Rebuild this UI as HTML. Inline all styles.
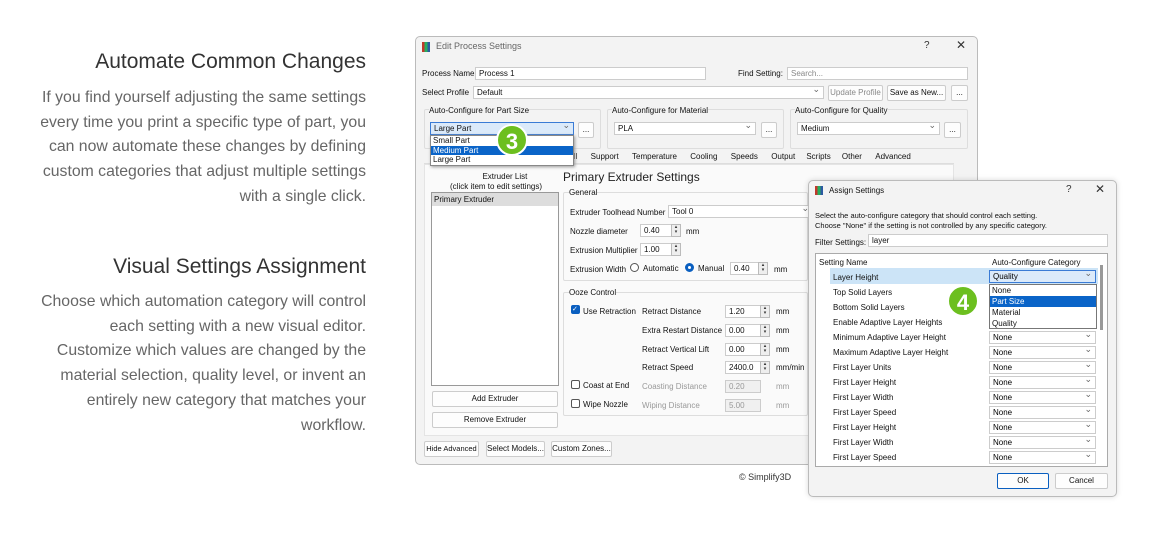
<!DOCTYPE html><html><head><style>
*{box-sizing:border-box;margin:0;padding:0}
body{width:1168px;height:547px;background:#fff;position:relative;overflow:hidden;font-family:"Liberation Sans",sans-serif}
.a{position:absolute;white-space:nowrap}
.h{right:802px;font-size:21px;color:#333;text-align:right}
.p{right:802px;font-size:15.8px;color:#666;text-align:right;line-height:24.7px}
.u{font-size:8px;color:#111}
.in{position:absolute;background:#fff;border:1px solid #ccc;font-size:8px;padding:1px 3px;height:13px;line-height:10px;color:#111;white-space:nowrap}
.btn{position:absolute;background:#fdfdfd;border:1px solid #ccc;border-radius:2px;font-size:8px;text-align:center;line-height:14px;height:16px;color:#111;white-space:nowrap;overflow:hidden}
.grp{position:absolute;border:1px solid #ddd;border-radius:2px}
.dd::after{content:"⌄";position:absolute;right:3px;top:-3px;color:#666;font-size:9px}
.sp{position:absolute;width:10px;height:13px;border:1px solid #bbb;background:#eee;font-size:5px;text-align:center;line-height:5px;color:#333}
.cb{position:absolute;width:9px;height:9px;border:1px solid #555;border-radius:2px;background:#fff}
.badge{position:absolute;width:32px;height:32px;border-radius:50%;background:#6cbf1f;color:#fff;font-weight:bold;font-size:22px;text-align:center;line-height:32px;border:2px solid #fff}
.row{position:absolute;left:833px;font-size:8px;color:#111}
.sel{position:absolute;left:989px;width:107px;height:13px;border:1px solid #ccc;background:#fff;font-size:8px;padding:1px 3px;line-height:10px}
</style></head><body>
<div class="a h" style="top:50px">Automate Common Changes</div>
<div class="a p" style="top:86px">If you find yourself adjusting the same settings<br>every time you print a specific type of part, you<br>can now automate these changes by defining<br>custom categories that adjust multiple settings<br>with a single click.</div>
<div class="a h" style="top:255px">Visual Settings Assignment</div>
<div class="a p" style="top:290px">Choose which automation category will control<br>each setting with a new visual editor.<br>Customize which values are changed by the<br>material selection, quality level, or invent an<br>entirely new category that matches your<br>workflow.</div>

<!-- main window -->
<div class="a" style="left:415px;top:36px;width:563px;height:429px;background:#f3f3f3;border:1px solid #bbb;border-radius:5px"></div>
<div class="a" style="left:422px;top:42px;width:8px;height:10px;background:linear-gradient(90deg,#c0392b 33%,#27ae60 33% 66%,#2c5aa0 66%)"></div>
<div class="a u" style="left:436px;top:41px;color:#666;font-size:9px">Edit Process Settings</div>
<div class="a" style="left:924px;top:40px;font-size:10px;color:#333">?</div>
<div class="a" style="left:956px;top:38px;font-size:12px;color:#333">✕</div>
<div class="a u" style="left:422px;top:69px">Process Name</div>
<div class="in" style="left:475px;top:67px;width:231px">Process 1</div>
<div class="a u" style="left:738px;top:69px">Find Setting:</div>
<div class="in" style="left:787px;top:67px;width:181px;color:#888">Search...</div>
<div class="a u" style="left:422px;top:88px">Select Profile</div>
<div class="in dd" style="left:473px;top:86px;width:351px">Default</div>
<div class="btn" style="left:828px;top:85px;width:55px;color:#888">Update Profile</div>
<div class="btn" style="left:887px;top:85px;width:59px">Save as New...</div>
<div class="btn" style="left:951px;top:85px;width:17px">...</div>
<div class="grp" style="left:424px;top:109px;width:177px;height:40px"></div>
<div class="a u" style="left:429px;top:106px;background:#f3f3f3">Auto-Configure for Part Size</div>
<div class="grp" style="left:607px;top:109px;width:177px;height:40px"></div>
<div class="a u" style="left:612px;top:106px;background:#f3f3f3">Auto-Configure for Material</div>
<div class="grp" style="left:790px;top:109px;width:178px;height:40px"></div>
<div class="a u" style="left:795px;top:106px;background:#f3f3f3">Auto-Configure for Quality</div>
<div class="in dd" style="left:430px;top:122px;width:144px;border-color:#3a7bd5;background:#dbeafa">Large Part</div>
<div class="btn" style="left:578px;top:122px;width:16px">...</div>
<div class="in dd" style="left:614px;top:122px;width:142px">PLA</div>
<div class="btn" style="left:761px;top:122px;width:16px">...</div>
<div class="in dd" style="left:797px;top:122px;width:143px">Medium</div>
<div class="btn" style="left:944px;top:122px;width:17px">...</div>
<!-- tabs -->
<div class="a" style="left:424px;top:149px;width:530px;height:15px;border-bottom:1px solid #ddd"></div>
<div class="a u" style="left:572px;top:152px">ill&nbsp;&nbsp;&nbsp;&nbsp;&nbsp;&nbsp;Support&nbsp;&nbsp;&nbsp;&nbsp;&nbsp;&nbsp;Temperature&nbsp;&nbsp;&nbsp;&nbsp;&nbsp;&nbsp;Cooling&nbsp;&nbsp;&nbsp;&nbsp;&nbsp;&nbsp;Speeds&nbsp;&nbsp;&nbsp;&nbsp;&nbsp;&nbsp;Output&nbsp;&nbsp;&nbsp;&nbsp;&nbsp;Scripts&nbsp;&nbsp;&nbsp;&nbsp;&nbsp;Other&nbsp;&nbsp;&nbsp;&nbsp;&nbsp;&nbsp;Advanced</div>
<div class="a" style="left:424px;top:164px;width:530px;height:272px;background:#fafafa;border:1px solid #e4e4e4"></div>
<!-- dropdown list -->
<div class="a" style="left:430px;top:135px;width:144px;height:31px;background:#fff;border:1px solid #888;box-shadow:1px 1px 3px #999;font-size:8px;line-height:9.5px;color:#111">
<div style="padding-left:2px">Small Part</div><div style="padding-left:2px;background:#0a64c8;color:#fff">Medium Part</div><div style="padding-left:2px">Large Part</div></div>
<div class="badge" style="left:496px;top:124px">3</div>
<div class="a u" style="left:450px;top:172px;text-align:center;line-height:9.5px">&nbsp;&nbsp;&nbsp;&nbsp;&nbsp;&nbsp;&nbsp;&nbsp;Extruder List<br>(click item to edit settings)</div>
<div class="a" style="left:431px;top:192px;width:128px;height:194px;background:#fff;border:1px solid #999"></div>
<div class="a u" style="left:432px;top:193px;width:126px;height:13px;background:#ddd;padding:2px"> Primary Extruder</div>
<div class="btn" style="left:432px;top:391px;width:126px">Add Extruder</div>
<div class="btn" style="left:432px;top:412px;width:126px">Remove Extruder</div>
<div class="a" style="left:563px;top:170px;font-size:12px;color:#222">Primary Extruder Settings</div>
<div class="grp" style="left:563px;top:192px;width:245px;height:89px"></div>
<div class="a u" style="left:569px;top:188px;background:#fafafa">General</div>
<div class="a u" style="left:570px;top:208px">Extruder Toolhead Number</div>
<div class="in dd" style="left:668px;top:205px;width:145px">Tool 0</div>
<div class="a u" style="left:570px;top:227px">Nozzle diameter</div>
<div class="in" style="left:640px;top:224px;width:32px">0.40</div><div class="sp" style="left:671px;top:224px">▴<br>▾</div><div class="a u" style="left:686px;top:227px">mm</div>
<div class="a u" style="left:570px;top:246px">Extrusion Multiplier</div>
<div class="in" style="left:640px;top:243px;width:32px">1.00</div><div class="sp" style="left:671px;top:243px">▴<br>▾</div>
<div class="a u" style="left:570px;top:265px">Extrusion Width</div>
<div class="a" style="left:630px;top:263px;width:9px;height:9px;border:1px solid #555;border-radius:50%;background:#fff"></div>
<div class="a u" style="left:643px;top:264px">Automatic</div>
<div class="a" style="left:685px;top:263px;width:9px;height:9px;border:3px solid #0a5fc0;border-radius:50%;background:#fff"></div>
<div class="a u" style="left:698px;top:264px">Manual</div>
<div class="in" style="left:730px;top:262px;width:29px">0.40</div><div class="sp" style="left:758px;top:262px">▴<br>▾</div><div class="a u" style="left:774px;top:265px">mm</div>
<div class="grp" style="left:563px;top:292px;width:245px;height:124px"></div>
<div class="a u" style="left:569px;top:288px;background:#fafafa">Ooze Control</div>
<div class="cb" style="left:571px;top:305px;background:#0a5fc0;border-color:#0a5fc0;color:#fff;font-size:7px;line-height:7px">✓</div>
<div class="a u" style="left:583px;top:307px">Use Retraction</div>
<div class="a u" style="left:642px;top:307px">Retract Distance</div><div class="in" style="left:725px;top:305px;width:36px">1.20</div><div class="sp" style="left:760px;top:305px">▴<br>▾</div><div class="a u" style="left:776px;top:307px">mm</div>
<div class="a u" style="left:642px;top:326px">Extra Restart Distance</div><div class="in" style="left:725px;top:324px;width:36px">0.00</div><div class="sp" style="left:760px;top:324px">▴<br>▾</div><div class="a u" style="left:776px;top:326px">mm</div>
<div class="a u" style="left:642px;top:345px">Retract Vertical Lift</div><div class="in" style="left:725px;top:343px;width:36px">0.00</div><div class="sp" style="left:760px;top:343px">▴<br>▾</div><div class="a u" style="left:776px;top:345px">mm</div>
<div class="a u" style="left:642px;top:363px">Retract Speed</div><div class="in" style="left:725px;top:361px;width:36px">2400.0</div><div class="sp" style="left:760px;top:361px">▴<br>▾</div><div class="a u" style="left:776px;top:363px">mm/min</div>
<div class="cb" style="left:571px;top:380px"></div><div class="a u" style="left:583px;top:381px">Coast at End</div>
<div class="a u" style="left:642px;top:382px;color:#999">Coasting Distance</div><div class="in" style="left:725px;top:380px;width:36px;background:#f0f0f0;color:#999">0.20</div><div class="a u" style="left:776px;top:382px;color:#999">mm</div>
<div class="cb" style="left:571px;top:399px"></div><div class="a u" style="left:583px;top:400px">Wipe Nozzle</div>
<div class="a u" style="left:642px;top:401px;color:#999">Wiping Distance</div><div class="in" style="left:725px;top:399px;width:36px;background:#f0f0f0;color:#999">5.00</div><div class="a u" style="left:776px;top:401px;color:#999">mm</div>
<div class="btn" style="left:424px;top:441px;width:55px;font-size:7.5px">Hide Advanced</div>
<div class="btn" style="left:486px;top:441px;width:59px">Select Models...</div>
<div class="btn" style="left:551px;top:441px;width:61px">Custom Zones...</div>
<div class="a" style="left:739px;top:472px;font-size:9px;color:#333">© Simplify3D</div>

<!-- assign dialog -->
<div class="a" style="left:808px;top:180px;width:309px;height:317px;background:#f3f3f3;border:1px solid #bbb;border-radius:5px;box-shadow:0 0 6px rgba(0,0,0,.15)"></div>
<div class="a" style="left:815px;top:186px;width:8px;height:9px;background:linear-gradient(90deg,#c0392b 33%,#27ae60 33% 66%,#2c5aa0 66%)"></div>
<div class="a u" style="left:829px;top:186px">Assign Settings</div>
<div class="a" style="left:1066px;top:184px;font-size:10px;color:#333">?</div>
<div class="a" style="left:1095px;top:182px;font-size:12px;color:#333">✕</div>
<div class="a u" style="left:815px;top:211px;line-height:9.5px;font-size:7.5px">Select the auto-configure category that should control each setting.<br>Choose "None" if the setting is not controlled by any specific category.</div>
<div class="a u" style="left:815px;top:238px">Filter Settings:</div>
<div class="in" style="left:868px;top:234px;width:240px">layer</div>
<div class="a" style="left:815px;top:253px;width:293px;height:214px;background:#fff;border:1px solid #aaa"></div>
<div class="a" style="left:1100px;top:265px;width:3px;height:65px;background:#999"></div>
<div class="a u" style="left:819px;top:258px">Setting Name</div>
<div class="a u" style="left:992px;top:258px">Auto-Configure Category</div>
<div class="a" style="left:830px;top:268px;width:268px;height:16px;background:#cce4f7"></div>
<div class="row" style="top:273px">Layer Height</div>
<div class="sel dd" style="top:270px;border-color:#3a7bd5;background:#dbeafa">Quality</div>
<div class="row" style="top:288px">Top Solid Layers</div>
<div class="row" style="top:303px">Bottom Solid Layers</div>
<div class="row" style="top:318px">Enable Adaptive Layer Heights</div>
<div class="row" style="top:333px">Minimum Adaptive Layer Height</div><div class="sel dd" style="top:331px">None</div>
<div class="row" style="top:348px">Maximum Adaptive Layer Height</div><div class="sel dd" style="top:346px">None</div>
<div class="row" style="top:363px">First Layer Units</div><div class="sel dd" style="top:361px">None</div>
<div class="row" style="top:378px">First Layer Height</div><div class="sel dd" style="top:376px">None</div>
<div class="row" style="top:393px">First Layer Width</div><div class="sel dd" style="top:391px">None</div>
<div class="row" style="top:408px">First Layer Speed</div><div class="sel dd" style="top:406px">None</div>
<div class="row" style="top:423px">First Layer Height</div><div class="sel dd" style="top:421px">None</div>
<div class="row" style="top:438px">First Layer Width</div><div class="sel dd" style="top:436px">None</div>
<div class="row" style="top:453px">First Layer Speed</div><div class="sel dd" style="top:451px">None</div>
<div class="a" style="left:989px;top:284px;width:108px;height:45px;background:#fff;border:1px solid #777;font-size:8px;line-height:11px;color:#111">
<div style="padding-left:2px">None</div><div style="padding-left:2px;background:#0a64c8;color:#fff">Part Size</div><div style="padding-left:2px">Material</div><div style="padding-left:2px">Quality</div></div>
<div class="badge" style="left:947px;top:285px">4</div>
<div class="btn" style="left:997px;top:473px;width:52px;border-color:#0a5fc0">OK</div>
<div class="btn" style="left:1055px;top:473px;width:53px">Cancel</div>
</body></html>
